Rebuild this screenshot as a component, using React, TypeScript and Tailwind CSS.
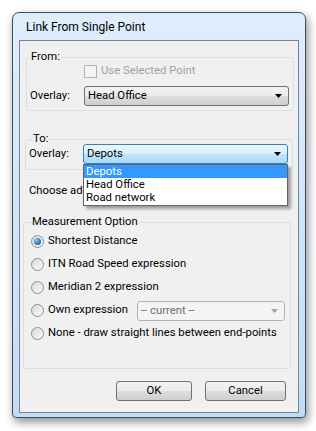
import React from "react"

const font = { fontFamily: 'Roboto, "Liberation Sans", Arial, sans-serif' }

function Arrow({ disabled }: { disabled?: boolean }) {
  return (
    <svg width="7" height="4" viewBox="0 0 7 4" className="shrink-0">
      <path d="M0 0H7L3.5 4Z" fill={disabled ? "#a3a3a3" : "#000"} />
    </svg>
  )
}

function Combo({ value, variant = "normal", className = "" }: { value: string; variant?: "normal" | "focus" | "disabled"; className?: string }) {
  const look =
    variant === "focus"
      ? "border-[#3c7fb1] bg-[linear-gradient(#eaf6fd_0%,#d9f0fc_50%,#bee6fd_50%,#a7d9f5_100%)] text-black"
      : variant === "disabled"
      ? "border-[#b0b4b8] bg-[#f4f4f4] text-[#6d6d6d]"
      : "border-[#707070] bg-[linear-gradient(#f2f2f2_0%,#ebebeb_50%,#dddddd_50%,#cfcfcf_100%)] text-black"
  return (
    <div className={`h-[20px] flex items-center justify-between rounded-[3px] border pl-[3px] pr-[6px] ${look} ${className}`}>
      <span className="leading-none whitespace-nowrap">{value}</span>
      <Arrow disabled={variant === "disabled"} />
    </div>
  )
}

function Radio({ checked }: { checked?: boolean }) {
  return (
    <div className="w-[13px] h-[13px] rounded-full border border-[#8e8f8f] bg-[linear-gradient(135deg,#d9d9d9,#fafafa)] flex items-center justify-center shrink-0">
      {checked && <div className="w-[7px] h-[7px] rounded-full bg-[radial-gradient(circle_at_35%_35%,#8fd0f5,#1d64b3_70%,#0d3f7a)]" />}
    </div>
  )
}

function Button({ label, w }: { label: string; w: string }) {
  return (
    <div className={`${w} h-[20px] flex items-center justify-center rounded-[3px] border border-[#707070] bg-[linear-gradient(#f2f2f2_0%,#ebebeb_50%,#dddddd_50%,#cfcfcf_100%)] text-black`}>
      {label}
    </div>
  )
}

export default function App() {
  return (
    <div className="w-[316px] h-[431px] bg-white pt-[12px] pl-[12px] text-[11.3px] text-black whitespace-nowrap" style={font}>
      <div className="w-[294px] h-[406px] flex flex-col rounded-t-[7px] rounded-b-[4px] border border-[#3e4d5c] bg-[linear-gradient(#dfedfb,#c4dcf3)] shadow-[2px_4px_10px_rgba(0,0,0,0.45)] px-[6px] pb-[4px]">
        <div className="h-[27px] flex items-center pl-[7px] shrink-0 text-[12px]">Link From Single Point</div>

        <div className="flex-1 border border-[#72869b] bg-[#f0f0f0] flex flex-col">
          {/* From */}
          <fieldset className="mt-[8px] ml-[6px] w-[268px] rounded-[3px] border border-[#d5dfe5] pb-[4px]">
            <legend className="ml-[3px] px-[1px] leading-[16px]">From:</legend>
            <div className="h-[14px] flex items-center pl-[57px] gap-[4px] -mt-[1px]">
              <div className="w-[13px] h-[13px] border border-[#b1b1b1] bg-[#f4f4f4]" />
              <span className="text-[#a0a0a0]">Use Selected Point</span>
            </div>
            <div className="mt-[8px] flex items-center pl-[3px] pr-[4px]">
              <span className="w-[54px]">Overlay:</span>
              <Combo value="Head Office" className="flex-1" />
            </div>
          </fieldset>

          {/* To */}
          <fieldset className="mt-[20px] ml-[5px] w-[268px] rounded-[3px] border border-[#d5dfe5] pb-[5px]">
            <legend className="ml-[6px] px-[1px] leading-[16px]">To:</legend>
            <div className="-mt-[3px] flex items-center pl-[3px] pr-[4px]">
              <span className="w-[54px]">Overlay:</span>
              <div className="flex-1 relative">
                <Combo value="Depots" variant="focus" />
                <div className="absolute z-10 top-full left-0 w-[205px] border border-[#646464] bg-white shadow-[3px_3px_3px_rgba(0,0,0,0.35)] flex flex-col leading-[13px]">
                  <div className="bg-[#3399ff] text-white pl-[2px] h-[13px]">Depots</div>
                  <div className="pl-[2px] h-[13px]">Head Office</div>
                  <div className="pl-[2px] h-[14px]">Road network</div>
                </div>
              </div>
            </div>
          </fieldset>

          <div className="mt-[13px] ml-[9px] leading-[16px]">Choose address field</div>

          {/* Measurement */}
          <fieldset className="mt-[15px] ml-[3px] w-[268px] rounded-[3px] border border-[#d5dfe5] pb-[23px]">
            <legend className="ml-[7px] px-[1px] leading-[16px]">Measurement Option</legend>
            <div className="flex flex-col pl-[7px] pr-[5px]">
              <div className="h-[23px] flex items-center gap-[4px]">
                <Radio checked />
                <span>Shortest Distance</span>
              </div>
              <div className="h-[23px] flex items-center gap-[4px]">
                <Radio />
                <span>ITN Road Speed expression</span>
              </div>
              <div className="h-[23px] flex items-center gap-[4px]">
                <Radio />
                <span>Meridian 2 expression</span>
              </div>
              <div className="h-[23px] flex items-center gap-[4px]">
                <Radio />
                <span>Own expression</span>
                <Combo value="-- current --" variant="disabled" className="ml-auto w-[148px]" />
              </div>
              <div className="h-[23px] flex items-center gap-[4px]">
                <Radio />
                <span>None - draw straight lines between end-points</span>
              </div>
            </div>
          </fieldset>

          <div className="mt-[12px] flex pl-[96px] gap-[13px]">
            <Button label="OK" w="w-[76px]" />
            <Button label="Cancel" w="w-[81px]" />
          </div>
        </div>
      </div>
    </div>
  )
}
